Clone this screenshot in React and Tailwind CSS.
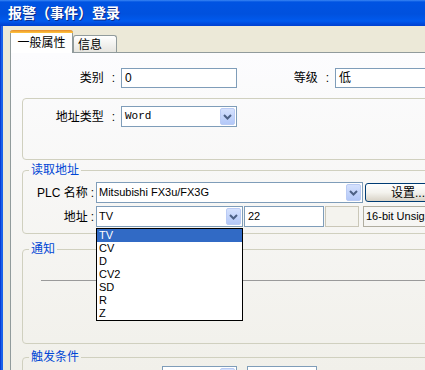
import React from "react";

function DropBtn() {
  return (
    <div className="p-px h-full shrink-0">
      <div className="w-[15px] h-full flex items-center justify-center border border-[#BACBF4] rounded-[2px] bg-linear-to-b from-[#D5E1FD] to-[#B3C8F8]">
        <svg width="9" height="6" viewBox="0 0 9 6">
          <path d="M1 1 L4.5 4.5 L8 1" fill="none" stroke="#4D6185" strokeWidth="2" />
        </svg>
      </div>
    </div>
  );
}

function Label({ text, w, gap, right }) {
  return (
    <div className={`shrink-0 flex items-center justify-end text-[12px] text-black ${w}`}>
      <span>{text}</span>
      <span className={`${gap} ${right}`}>:</span>
    </div>
  );
}

export default function App() {
  return (
    <div className="relative w-[425px] h-[370px] overflow-hidden bg-[#ECE9D8] [font-family:'Liberation_Sans','Noto_Sans_CJK_SC',sans-serif]">
      {/* Title bar */}
      <div className="h-[26px] flex items-center pl-[8px] text-white font-bold text-[14px] [text-shadow:1px_1px_0_#0A2A8A] bg-[linear-gradient(to_bottom,#3A86F4_0px,#0053E2_2px,#0051DE_14px,#005AEE_21px,#0049DB_24px,#0041D0_26px)]">
        报警（事件）登录
      </div>
      {/* Body */}
      <div className="flex h-[344px]">
        <div className="w-px shrink-0 bg-[#0A3ED4]" />
        <div className="w-[2px] shrink-0 bg-[#1A62EA]" />
        <div className="w-[7px] shrink-0" />
        <div className="flex-1 flex flex-col min-w-0">
          {/* Tab strip */}
          <div className="h-[26px] flex items-end shrink-0">
            <div className="relative z-10 -mb-px h-[23px] w-[63px] shrink-0 bg-white border-x border-[#919B9C] rounded-t-[3px] flex flex-col">
              <div className="h-[3px] -mx-px rounded-t-[3px] bg-linear-to-b from-[#E68B2C] to-[#FFC73C]" />
              <div className="flex-1 flex items-center justify-center text-[12px] text-black pb-[1px]">一般属性</div>
            </div>
            <div className="h-[17px] w-[44px] shrink-0 border border-b-0 border-[#919B9C] rounded-t-[3px] bg-linear-to-b from-white to-[#E6E5DF] flex items-center pl-[4px] pt-[2px] text-[12px] text-black">
              信息
            </div>
          </div>
          {/* Panel */}
          <div className="flex-1 border-t border-l border-[#919B9C] bg-linear-to-b from-[#FCFCFE] to-[#F1F0EA] overflow-hidden">
            {/* Row 1 */}
            <div className="mt-[15px] flex items-center h-[20px]">
              <Label text="类别" w="w-[110px]" gap="ml-[8px]" right="mr-[6px]" />
              <div className="shrink-0 w-[116px] h-[20px] border border-[#7F9DB9] bg-white flex items-center pl-[3px] text-[12px]">0</div>
              <Label text="等级" w="w-[98px]" gap="ml-[8px]" right="mr-[6px]" />
              <div className="shrink-0 w-[100px] h-[20px] border border-[#7F9DB9] bg-white flex items-center pl-[3px] text-[12px]">低</div>
            </div>
            {/* Box 1 */}
            <div className="ml-[11px] mt-[10px] h-[62px] w-[420px] border border-[#D0D0BF] rounded-[4px]">
              <div className="mt-[7px] flex items-center">
                <Label text="地址类型" w="w-[98px]" gap="ml-[8px]" right="mr-[6px]" />
                <div className="shrink-0 w-[116px] h-[21px] border border-[#7F9DB9] bg-white flex">
                  <div className="flex-1 flex items-center pl-[3px] text-[11px] [font-family:'Liberation_Mono',monospace]">Word</div>
                  <DropBtn />
                </div>
              </div>
            </div>
            {/* Box 2 */}
            <fieldset className="ml-[11px] mt-[3px] w-[420px] border border-[#D0D0BF] rounded-[4px] pb-[6px]">
              <legend className="ml-[6px] px-[2px] text-[12px] leading-[14px] text-[#0046D5]">读取地址</legend>
              <div className="pt-[5px] flex items-start">
                <Label text="PLC 名称" w="w-[73px] h-[21px]" gap="ml-[3px]" right="mr-[2px]" />
                <div className="shrink-0 w-[267px] h-[21px] border border-[#7F9DB9] bg-white flex">
                  <div className="flex-1 flex items-center pl-[2px] text-[11px]">Mitsubishi FX3u/FX3G</div>
                  <DropBtn />
                </div>
                <div className="shrink-0 ml-[2px] mt-px w-[86px] h-[19px] border border-[#003C74] rounded-[3px] bg-linear-to-b from-white via-[#F4F3EE] to-[#D8D2C6] flex items-center justify-center text-[12px]">
                  设置...
                </div>
              </div>
              <div className="mt-[3px] flex items-start">
                <Label text="地址" w="w-[73px] h-[21px]" gap="ml-[3px]" right="mr-[2px]" />
                <div className="relative z-20 shrink-0 w-[147px] h-[21px] border border-[#7F9DB9] bg-white flex">
                  <div className="flex-1 flex items-center pl-[2px] text-[11px]">TV</div>
                  <DropBtn />
                  <div className="absolute left-[-1px] top-[21px] w-[147px] border border-black bg-white text-[11px]">
                    <div className="h-[13px] leading-[13px] pl-[2px] bg-[#316AC5] text-white">TV</div>
                    <div className="h-[13px] leading-[13px] pl-[2px]">CV</div>
                    <div className="h-[13px] leading-[13px] pl-[2px]">D</div>
                    <div className="h-[13px] leading-[13px] pl-[2px]">CV2</div>
                    <div className="h-[13px] leading-[13px] pl-[2px]">SD</div>
                    <div className="h-[13px] leading-[13px] pl-[2px]">R</div>
                    <div className="h-[13px] leading-[13px] pl-[2px]">Z</div>
                  </div>
                </div>
                <div className="shrink-0 ml-px w-[80px] h-[21px] border border-[#7F9DB9] bg-white flex items-center pl-[3px] text-[11px]">22</div>
                <div className="shrink-0 ml-px w-[34px] h-[21px] border border-[#CAC7B8] bg-[#F4F3EE]" />
                <div className="shrink-0 ml-[4px] w-[90px] h-[21px] border border-[#B0ADA0] flex items-center pl-[2px] text-[11px] whitespace-nowrap overflow-hidden">16-bit Unsigned</div>
              </div>
            </fieldset>
            {/* Box 3 */}
            <fieldset className="ml-[11px] mt-[8px] w-[420px] border border-[#D0D0BF] rounded-[4px] pb-[62px]">
              <legend className="ml-[6px] px-[2px] text-[12px] leading-[14px] text-[#0046D5]">通知</legend>
              <div className="mt-[24px] ml-[18px] h-px bg-[#9A9A9A]" />
            </fieldset>
            {/* Box 4 */}
            <fieldset className="ml-[11px] mt-[6px] w-[420px] h-[40px] border border-[#D0D0BF] rounded-[4px]">
              <legend className="ml-[6px] px-[2px] text-[12px] leading-[14px] text-[#0046D5]">触发条件</legend>
              <div className="pt-[2px] flex">
                <div className="shrink-0 ml-[139px] w-[75px] h-[21px] border border-[#7F9DB9] bg-white flex">
                  <div className="flex-1" />
                  <DropBtn />
                </div>
                <div className="shrink-0 ml-[10px] w-[70px] h-[21px] border border-[#7F9DB9] bg-white" />
              </div>
            </fieldset>
          </div>
        </div>
      </div>
    </div>
  );
}
